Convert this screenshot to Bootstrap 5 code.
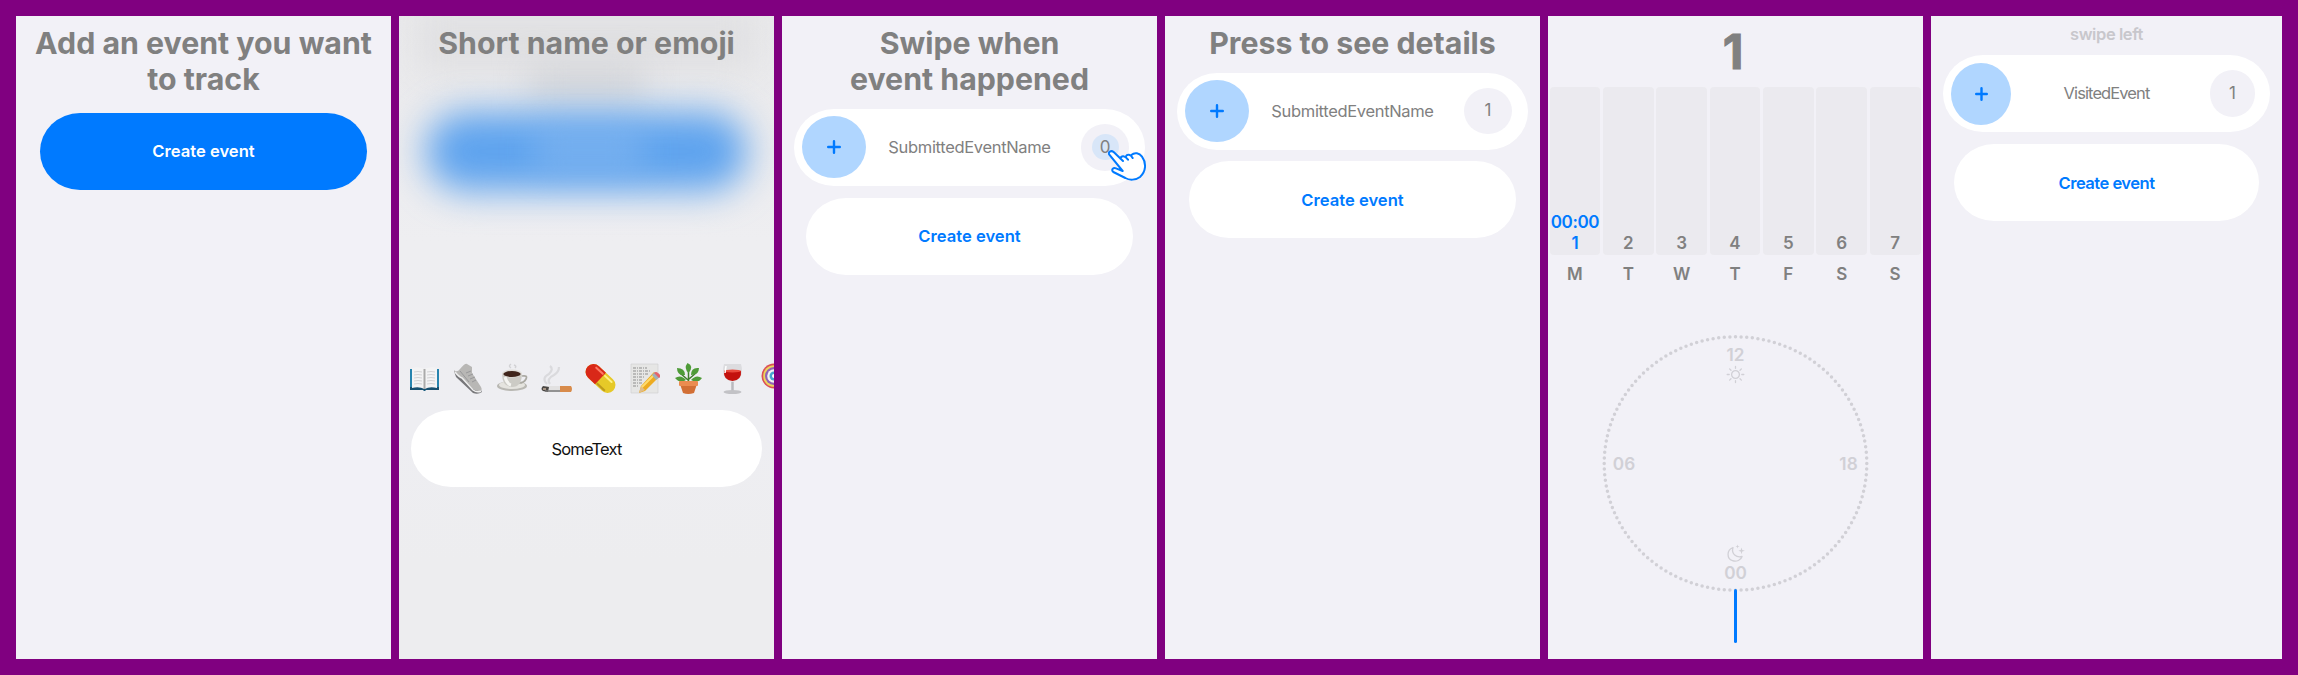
<!DOCTYPE html>
<html lang="en">
<head>
<meta charset="utf-8">
<title>Event tracker onboarding</title>
<link href="https://cdn.jsdelivr.net/npm/bootstrap@5.3.0/dist/css/bootstrap.min.css" rel="stylesheet">
<style>
body{background:#800080;font-family:Inter,"Liberation Sans",sans-serif;width:2298px;height:675px;overflow:hidden;font-size:16px}
.screen{width:375px;height:643px;background:#f2f1f7;flex:none}
.screen-last{width:351px}
.headline{font-size:30.3px;line-height:36.7px;font-weight:700;color:#808080;margin:0;padding-top:8.500px;white-space:nowrap}
.headline span{display:block}
.pill{height:77px;border-radius:40px/38.5px;background:#fff;flex:none}
.cta{margin:0 24px;padding-top:1px;color:#007aff;font-weight:600;font-size:16.600px}
.screen-last .cta{margin:0 23px;letter-spacing:-.54px}
.cta-blue{background:#007aff;color:#fff}
.entry{margin:0 12px;padding:0 16px 0 8px;color:#808080;font-size:16.5px}
.screen-last .entry{padding-right:15px}
.plus{width:64px;height:62px;background:#b0d6ff;border-radius:50%}
.tally{width:48px;height:46.5px;background:#f2f1f7;border-radius:50%;font-size:17px}
.screen-last .plus{width:60px}.screen-last .tally{width:45px}
.touch{width:27px;height:26px;border-radius:50%;background:#d8e6f8}
.hand{left:313.500px;top:38px;width:44px;height:42px}
.name-txt{display:block;letter-spacing:-.33px}
.screen-last .name-txt{letter-spacing:-.9px}
.haze{inset:0;background:linear-gradient(#e9e9eb,#eeeef1 35%,#eeeef2 65%,#ededef 85%)}
.haze-title{left:20px;top:-5px;width:335px;height:60px;background:#e0e0e2;filter:blur(16px)}
.haze-word{left:130px;top:50px;width:115px;height:34px;background:#d2d4d8;filter:blur(17px)}
.haze-btn{left:27px;top:96px;width:321px;height:79px;border-radius:40px;background:#5ea3ee;filter:blur(18px)}
.haze-label{left:135px;top:113px;width:110px;height:42px;background:#86b8f0;filter:blur(16px);opacity:.6}
.emoji-row{gap:13.100px;padding-left:9.5px;height:31px}
.emoji-row svg{width:31px;height:31px;flex:none}
.typed{margin:0 12px;padding-top:1px;color:#111;font-size:16.5px;letter-spacing:-.8px}
.count-big{height:71px;font-size:48px;font-weight:700;color:#808080;line-height:72px;padding-right:5px;-webkit-text-stroke:1px #808080}
.days{padding:0 2.5px 0 1.5px;gap:2.5px}
.day{flex:1 1 0;min-width:0;font-size:17px;font-weight:600;color:#808080}
.bar{height:168px;border-radius:4px;background:#ebeaef;line-height:20.4px;padding-bottom:2px}
.bar .hour{color:#007aff;white-space:nowrap;letter-spacing:-.35px}
.weekday{height:31.500px;padding-top:6.5px}
.dial text{font:600 17.2px Inter,sans-serif;fill:#d1d0d6;text-anchor:middle}
.hint{color:#c8c7cc;font-weight:600;font-size:16.5px;line-height:20px;padding-top:7.5px;height:39px;letter-spacing:-.42px}
</style>
</head>
<body>
<main class="d-flex gap-2 p-3">

<section class="screen text-center">
  <h1 class="headline"><span>Add an event you want</span><span>to track</span></h1>
  <div class="pill cta cta-blue d-flex align-items-center justify-content-center" style="margin-top:15px">Create event</div>
</section>

<section class="screen text-center position-relative overflow-hidden">
  <div class="haze position-absolute"></div>
  <div class="haze-title position-absolute"></div>
  <div class="haze-word position-absolute"></div>
  <div class="haze-btn position-absolute"></div>
  <div class="haze-label position-absolute"></div>
  <div class="position-relative">
    <h1 class="headline"><span>Short name or emoji</span></h1>
    <div class="emoji-row d-flex" style="margin-top:302px">
      <svg viewBox="0 0 31 31"><path d="M1 6h29v21H17l-1.500 1L14 27H1z" fill="#2784ae"/><path d="M1 24h29v3H17l-1.500 1L14 27H1z" fill="#17506f"/><path d="M3 5q7-2 12.500 1Q21 3 28 5v20q-7-2-12.500 1Q10 23 3 25z" fill="#f3f3f4"/><path d="M15.500 6v20" stroke="#aaa" stroke-width="2"/><path d="M5 9q4-1 8 0M5 12q4-1 8 0M5 15q4-1 8 0M5 18q4-1 8 0M5 21q4-1 8 0M18 9q4-1 8 0M18 12q4-1 8 0M18 15q4-1 8 0M18 18q4-1 8 0M18 21q4-1 8 0" stroke="#c9c9cc" stroke-width=".8" fill="none"/></svg>
      <svg viewBox="0 0 31 31"><path d="M1 8l2 6 17 16q5 2 9-1L27 25z" fill="#77777a"/><path d="M1 7q3 3 6-1 5-6 7-5l5 3v6l9 14q2 4-2 4-5 0-8-4L8 14Q1 11 1 7z" fill="#b8b7b5"/><path d="M2 9q4 5 7 6l11 12q4 3 8 1" stroke="#eee" stroke-width="1.500" fill="none"/><path d="M13 10l5-2M15 13l5-2M17 16l5-2M19 19l4-2M7 8l9 11" stroke="#98989a" stroke-width="1"/></svg>
      <svg viewBox="0 0 31 31"><path d="M14 5q-3-2 0-4M18 5q2-2-1-3" stroke="#d2d2d5" stroke-width="1.500" fill="none"/><ellipse cx="15" cy="23" rx="15" ry="5" fill="#b9b8b3"/><ellipse cx="15" cy="22" rx="13" ry="4" fill="#e5e4df"/><path d="M25 13q6-1 4 3-2 4-7 4" stroke="#aaa9a2" stroke-width="1.700" fill="none"/><path d="M5 10q0 14 10 14t10-14z" fill="#cccbc5"/><path d="M8 14q2 7 6 8" stroke="#f4f4f0" stroke-width="3" fill="none"/><ellipse cx="15" cy="10.500" rx="10" ry="4" fill="#e0ded9"/><ellipse cx="15" cy="11" rx="8.700" ry="3" fill="#40251b"/></svg>
      <svg viewBox="0 0 31 31"><path d="M6 21q-6-6 2-10 5-5 1-8M9 21q-4-5 4-9 5-3 5-8" stroke="#dadadd" stroke-width="2.200" fill="none"/><path d="M4 23h16v6H4q-3-3 0-6" fill="#e2e1e1"/><path d="M19 23h11q2 3 0 6H19z" fill="#d88b4b"/><path d="M2 23l6 1-1 5-5-1q-3-2 0-5" fill="#4b4845"/><path d="M4 28h15" stroke="#777" stroke-width="1.500"/><path d="M2 26h3" stroke="#a79585" stroke-width="2"/></svg>
      <svg viewBox="0 0 31 31"><g transform="rotate(43 15.500 15.500)"><rect x="-2" y="7.500" width="35" height="16" rx="8" fill="#e6c928"/><path d="M15.500 7.500H6a8 8 0 0 0 0 16h9.500z" fill="#d92818"/><path d="M5 10.500h9" stroke="#ff7962" stroke-width="2" stroke-linecap="round"/><path d="M17 10.500h9" stroke="#fff283" stroke-width="2" stroke-linecap="round"/><path d="M16 21.500h11" stroke="#bd991c" stroke-width="2"/></g></svg>
      <svg viewBox="0 0 31 31"><path d="M2 1h27v29H2z" fill="#e6e6e5" stroke="#ccc" stroke-width=".6"/><path d="M4 5h14M4 8h17M4 11h16M4 14h12M4 17h9M4 20h9M4 23h6" stroke="#8d8d8d" stroke-width="1" stroke-dasharray="3 1 1 1"/><path d="M10 30l2-7L25 9l5 5-14 14z" fill="#edab20"/><path d="M12 25L26 11" stroke="#ffdc6c" stroke-width="2"/><path d="M10 30l2-7 4 4z" fill="#dfbd8b"/><path d="M23 12l3-3 5 5-4 3z" fill="#9fb0ba"/><path d="M25 10q2-2 4 0 4 3 1 5z" fill="#e5646a"/></svg>
      <svg viewBox="0 0 31 31"><path d="M15.500 20V5M15 17L7 10M16 16l8-7" stroke="#3e7c2a" stroke-width="1.500"/><path d="M15.500 10q-5-5-1-10 7 3 1 10M12 12Q4 13 4 5q8 0 8 7M18 12q0-8 8-7 0 7-8 7M13 17q-6 4-11-2 6-4 11 2M18 17q5-6 11-2-4 6-11 2" fill="#4e9b38"/><path d="M7 21h17l-3 9q-6 2-11 0z" fill="#d26f35"/><rect x="6" y="18" width="19" height="5" rx="1" fill="#eb8c50"/></svg>
      <svg viewBox="0 0 31 31"><path d="M7 1h17q4 15-8.500 18Q3 16 7 1z" fill="#dcdcdf"/><path d="M7 8h17q1 9-8.500 10Q6 17 7 8z" fill="#c3110d"/><ellipse cx="15.500" cy="8" rx="8.600" ry="1.500" fill="#e9493c"/><path d="M9 3l-1 7" stroke="#fff" stroke-width="1.500"/><path d="M15.500 19v10" stroke="#b9b9be" stroke-width="2.500"/><ellipse cx="15.500" cy="29" rx="9" ry="2" fill="#c2c2c6"/></svg>
      <svg viewBox="0 0 31 31"><circle cx="13" cy="13" r="12.500" fill="#db4f58"/><circle cx="13" cy="13" r="10.800" fill="#ecd45c"/><circle cx="13" cy="13" r="9" fill="#9162b6"/><circle cx="13" cy="13" r="6.800" fill="#f3f3f3"/><circle cx="13" cy="13" r="4.500" fill="#46a6ce"/><circle cx="13" cy="13" r="2" fill="#fff"/></svg>
    </div>
    <div class="pill typed d-flex align-items-center justify-content-center" style="margin-top:16px">SomeText</div>
  </div>
</section>

<section class="screen text-center">
  <h1 class="headline"><span>Swipe when</span><span>event happened</span></h1>
  <div class="pill entry d-flex align-items-center justify-content-between position-relative" style="margin-top:11px">
    <div class="plus d-flex align-items-center justify-content-center"><svg width="14" height="14" viewBox="0 0 14 14"><path d="M7 1.200v11.600M1.200 7h11.600" stroke="#007aff" stroke-width="2.400" stroke-linecap="round"/></svg></div>
    <span class="name-txt position-absolute start-50 translate-middle-x">SubmittedEventName</span>
    <div class="tally d-flex align-items-center justify-content-center"><div class="touch d-flex align-items-center justify-content-center">0</div></div>
    <svg class="hand position-absolute" viewBox="150 115 132 126"><g transform="translate(-22 3)"><path d="M208 176L176 135C171 127 181 121 189 127L217 154C214 147 211 145 209 147C212 137 222 137 232 150C229 145 227 142 225 141C230 132 240 134 246 145L242 136C252 127 266 130 274 141C288 160 286 186 268 202C255 212 236 212 224 205L188 187C180 180 188 173 196 176L216 184Z" fill="#fff"/><path d="M216 184L176 135C171 127 181 121 189 127L217 154M209 147C212 137 222 137 232 150M225 141C230 132 240 134 246 145M242 136C252 127 266 130 274 141C288 160 286 186 268 202C255 212 236 212 224 205L188 187C180 180 188 173 196 176L216 184" fill="none" stroke="#007aff" stroke-width="6" stroke-linecap="round" stroke-linejoin="round"/></g></svg>
  </div>
  <div class="pill cta d-flex align-items-center justify-content-center" style="margin-top:12px">Create event</div>
</section>

<section class="screen text-center">
  <h1 class="headline"><span>Press to see details</span></h1>
  <div class="pill entry d-flex align-items-center justify-content-between position-relative" style="margin-top:11.500px">
    <div class="plus d-flex align-items-center justify-content-center"><svg width="14" height="14" viewBox="0 0 14 14"><path d="M7 1.200v11.600M1.200 7h11.600" stroke="#007aff" stroke-width="2.400" stroke-linecap="round"/></svg></div>
    <span class="name-txt position-absolute start-50 translate-middle-x">SubmittedEventName</span>
    <div class="tally d-flex align-items-center justify-content-center">1</div>
  </div>
  <div class="pill cta d-flex align-items-center justify-content-center" style="margin-top:11.500px">Create event</div>
</section>

<section class="screen text-center">
  <div class="count-big">1</div>
  <div class="days d-flex">
    <div class="day"><div class="bar d-flex flex-column justify-content-end"><span class="hour">00:00</span><span class="hour">1</span></div><div class="weekday">M</div></div>
    <div class="day"><div class="bar d-flex flex-column justify-content-end">2</div><div class="weekday">T</div></div>
    <div class="day"><div class="bar d-flex flex-column justify-content-end">3</div><div class="weekday">W</div></div>
    <div class="day"><div class="bar d-flex flex-column justify-content-end">4</div><div class="weekday">T</div></div>
    <div class="day"><div class="bar d-flex flex-column justify-content-end">5</div><div class="weekday">F</div></div>
    <div class="day"><div class="bar d-flex flex-column justify-content-end">6</div><div class="weekday">S</div></div>
    <div class="day"><div class="bar d-flex flex-column justify-content-end">7</div><div class="weekday">S</div></div>
  </div>
  <svg class="dial d-block" width="375" height="360" viewBox="0 283 375 360" style="margin-top:12.500px">
    <ellipse cx="187.500" cy="447.500" rx="131.300" ry="126.700" fill="none" stroke="#d1d0d6" stroke-width="3.500" stroke-linecap="round" stroke-dasharray="0 1" pathLength="144"/>
    <text x="187.500" y="345">12</text><text x="187.500" y="562.500">00</text>
    <text x="76" y="453.800">06</text><text x="300.500" y="453.800">18</text>
    <g transform="translate(187.500 358.500)" fill="none" stroke="#d1d0d6" stroke-width="1.300" stroke-linecap="round"><circle r="3.900"/><path d="M0-8v1.800M0 8V6.200M-8.300 0h2M8.300 0h-2M-5.900-5.600l1.400 1.400M5.900-5.600l-1.400 1.400M-5.900 5.600l1.400-1.400M5.900 5.600l-1.400-1.400"/></g>
    <g transform="translate(187.500 537.500)"><path d="M-2.500-6C-9-3.500-9 5-3 7.200 1 8.700 5.500 6.500 6.600 3 1 4.500-4.500.5-2.500-6z" fill="none" stroke="#d1d0d6" stroke-width="1.300" stroke-linejoin="round"/><path d="M6-6l.8 2.500L9.400-2.700 6.800-1.900 6 .8 5.200-1.900 2.800-2.700l2.400-.8zM2-9l.5 1.500 1.600.5-1.600.5L2-5l-.5-1.500L0-7l1.500-.5z" fill="#d1d0d6"/></g>
    <path d="M187.500 574.500V625.500" stroke="#007aff" stroke-width="3" stroke-linecap="round"/>
  </svg>
</section>

<section class="screen screen-last text-center">
  <div class="hint">swipe left</div>
  <div class="pill entry d-flex align-items-center justify-content-between position-relative">
    <div class="plus d-flex align-items-center justify-content-center"><svg width="13" height="14" viewBox="0 0 13 14"><path d="M6.500 1.200v11.600M1.200 7h10.600" stroke="#007aff" stroke-width="2.400" stroke-linecap="round"/></svg></div>
    <span class="name-txt position-absolute start-50 translate-middle-x">VisitedEvent</span>
    <div class="tally d-flex align-items-center justify-content-center">1</div>
  </div>
  <div class="pill cta d-flex align-items-center justify-content-center" style="margin-top:12px">Create event</div>
</section>
</main>
<script src="https://cdn.jsdelivr.net/npm/bootstrap@5.3.0/dist/js/bootstrap.bundle.min.js"></script>
</body>
</html>
